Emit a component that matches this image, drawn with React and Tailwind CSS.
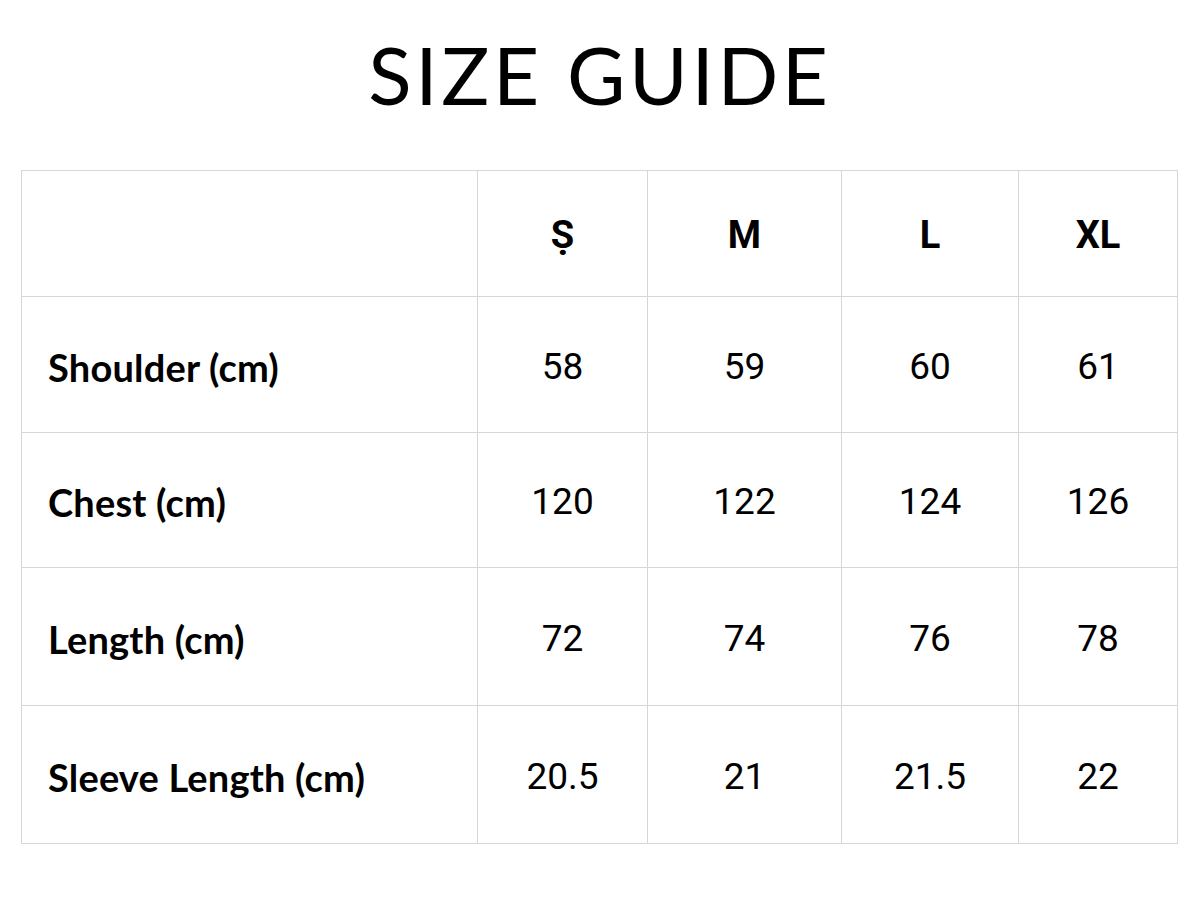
import React from 'react';

const sizes = ['Ṣ', 'M', 'L', 'XL'];

const rows = [
  { label: 'Shoulder (cm)', values: ['58', '59', '60', '61'], h: 'h-[136px]' },
  { label: 'Chest (cm)', values: ['120', '122', '124', '126'], h: 'h-[135px]' },
  { label: 'Length (cm)', values: ['72', '74', '76', '78'], h: 'h-[138px]' },
  { label: 'Sleeve Length (cm)', values: ['20.5', '21', '21.5', '22'], h: 'h-[138px]' },
];

const colWidths = ['w-[456px]', 'w-[170px]', 'w-[194px]', 'w-[177px]', 'w-[159px]'];

function App() {
  return (
    <div className="min-h-screen w-[1200px] h-[912px] bg-white text-[#111] pt-[34px]">
      {/* Title */}
      <h1 className="text-center font-['Lato',sans-serif] text-[80px] leading-[80px] font-normal tracking-[0.045em] text-black">
        SIZE GUIDE
      </h1>

      {/* Size table */}
      <div className="mt-[56px] px-[21px]">
        <table className="border-collapse table-fixed w-[1157px]">
          <colgroup>
            {colWidths.map((w, i) => (
              <col key={i} className={w} />
            ))}
          </colgroup>
          <thead>
            <tr className="h-[126px]">
              <th className="border border-[#d6d6d6]"></th>
              {sizes.map((s) => (
                <th
                  key={s}
                  className="border border-[#d6d6d6] pt-[3px] text-center align-middle font-['Roboto',sans-serif] font-bold text-[38px] text-black"
                >
                  {s}
                </th>
              ))}
            </tr>
          </thead>
          <tbody>
            {rows.map((row) => (
              <tr key={row.label} className={row.h}>
                <td className="border border-[#d6d6d6] pl-[26px] pt-[5px] align-middle font-['Lato',sans-serif] font-bold text-[38px] tracking-[0.005em] text-black">
                  {row.label}
                </td>
                {row.values.map((v, i) => (
                  <td
                    key={i}
                    className="border border-[#d6d6d6] pt-[4px] text-center align-middle font-['Roboto',sans-serif] font-normal text-[37px] text-black"
                  >
                    {v}
                  </td>
                ))}
              </tr>
            ))}
          </tbody>
        </table>
      </div>
    </div>
  );
}

export default App;
